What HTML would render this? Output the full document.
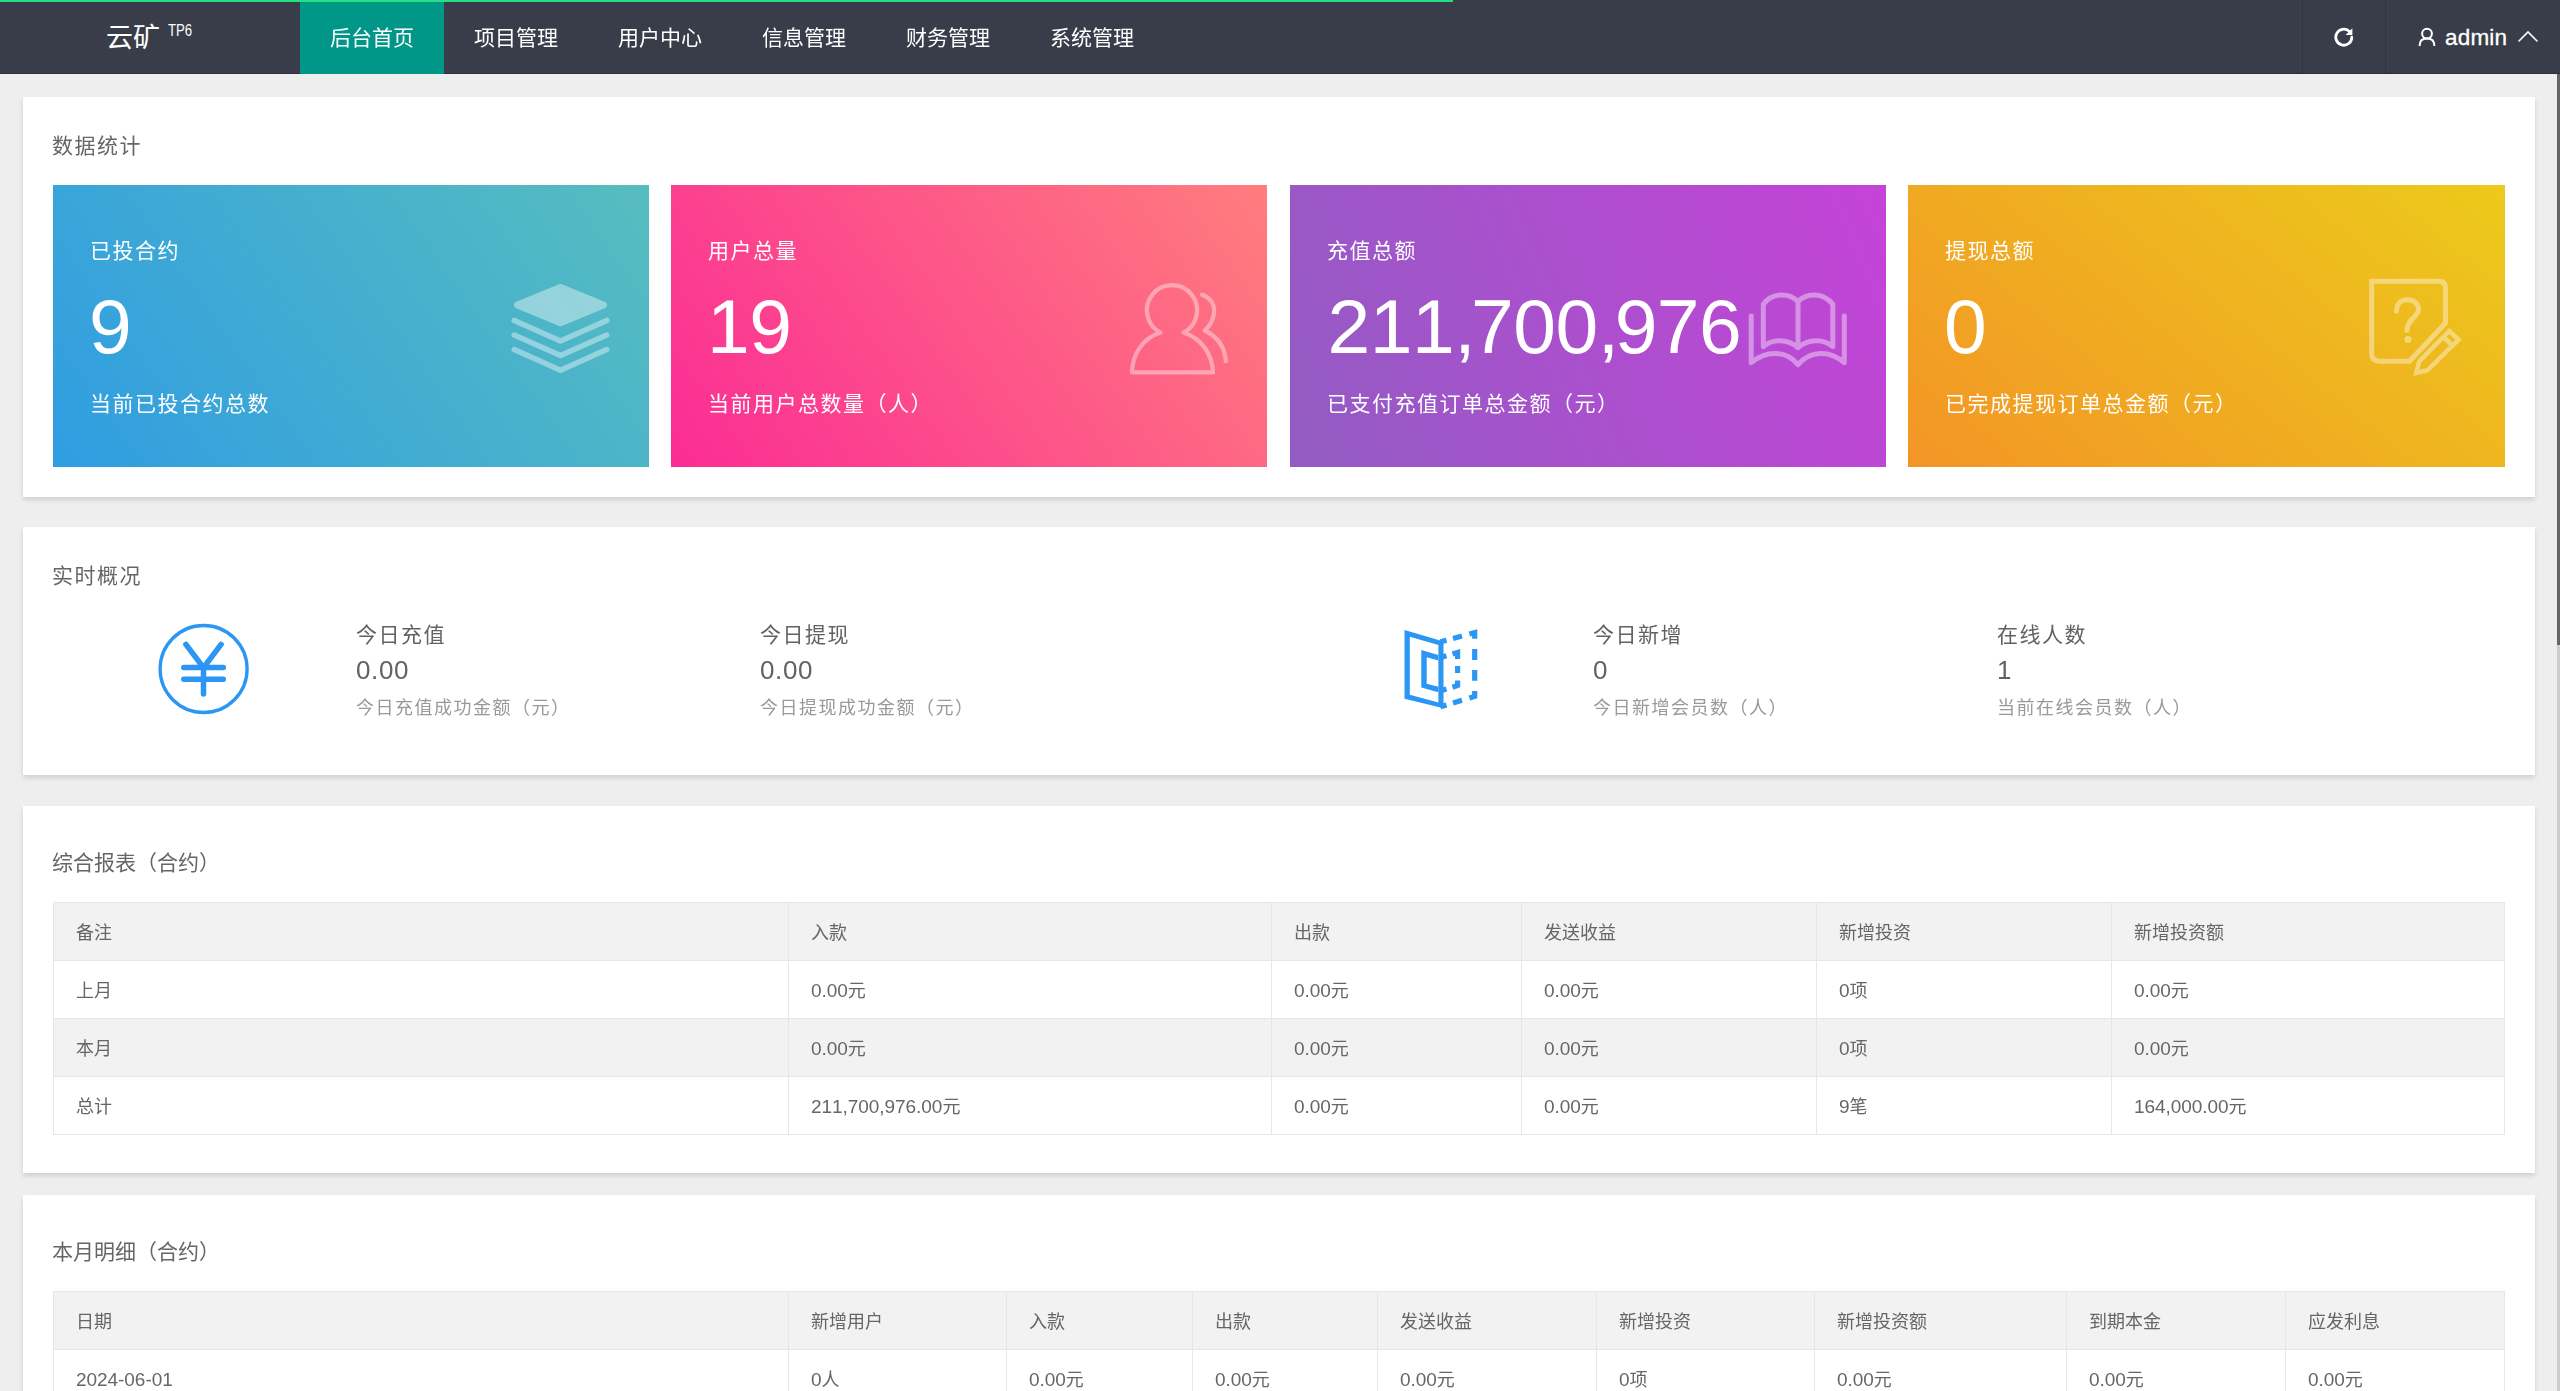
<!DOCTYPE html>
<html lang="zh-CN">
<head>
<meta charset="utf-8">
<title>云矿 TP6 · 后台首页</title>
<style>
*{box-sizing:border-box}
html,body{margin:0;padding:0}
body{width:2560px;height:1391px;overflow:hidden;position:relative;background:#eee;
  font-family:"Liberation Sans","Noto Sans CJK SC",sans-serif;font-size:21px;color:#666;
  -webkit-font-smoothing:antialiased;font-kerning:none}
a{color:inherit;text-decoration:none}
ul{margin:0;padding:0;list-style:none}

/* ---------- header ---------- */
.header{position:absolute;left:0;top:0;width:2560px;height:74px;background:#393d49;z-index:5;
  box-shadow:0 -1px 0 rgba(0,0,0,.22) inset}
.pace{position:absolute;left:0;top:0;width:1453px;height:2px;background:#22e080;z-index:9}
.logo{position:absolute;left:0;top:0;width:300px;height:74px;color:#fff}
.logo .name{position:absolute;left:106px;top:18px;font-size:27px;line-height:40px;white-space:nowrap}
.logo sup{position:absolute;left:168px;top:20px;font-size:16.5px;line-height:20px;white-space:nowrap;transform:scaleX(.8);transform-origin:0 50%}
.nav{position:absolute;left:300px;top:0;height:74px;display:flex}
.nav li{width:144px;height:74px;line-height:74px;text-align:center;color:#fff;font-size:21px;white-space:nowrap}
.nav li.on{background:#009688}
.nav li a{display:block;position:relative;top:1px}
.hbtn{position:absolute;top:0;height:74px;border-left:1px solid rgba(0,0,0,.16)}
.hbtn.refresh{left:2302px;width:83px}
.hbtn.user{left:2385px;width:175px;color:#fff}
.hbtn svg{position:absolute}
.hbtn.user .uname{position:absolute;left:59px;top:23.5px;font-size:22.5px;line-height:28px;white-space:nowrap;letter-spacing:.2px;-webkit-text-stroke:.3px #fff}

/* ---------- scrollbar ---------- */
.sbar{position:absolute;left:2557px;top:74px;width:3px;height:1317px;background:#ccc;z-index:4}
.sbar i{position:absolute;left:0;top:0;width:3px;height:571px;background:#666}

.main{position:absolute;left:0;top:0;width:2557px;height:1391px;overflow:hidden;will-change:transform}
/* ---------- cards ---------- */
.card{position:absolute;left:23px;width:2512px;background:#fff;box-shadow:0 2.5px 4.5px rgba(0,0,0,.12)}
.ctitle{position:absolute;left:52px;font-size:21px;line-height:30px;color:#666;white-space:nowrap}
.ctitle.sp{letter-spacing:1.5px}

/* ---------- stat cards ---------- */
.stat{position:absolute;top:185px;height:282px;color:#fff;font-size:21px;letter-spacing:1.5px;overflow:hidden}
.stat .t1{position:absolute;left:37px;top:23.5px;line-height:84px;white-space:nowrap}
.stat .num{position:absolute;left:36px;top:107.2px;font-size:76.8px;line-height:69px;letter-spacing:-.5px;white-space:nowrap}
.stat .num .c{letter-spacing:-4.4px}
.stat .t3{position:absolute;left:37px;top:176.5px;line-height:84px;white-space:nowrap}
.stat svg{position:absolute;left:0;top:0}
.s1{left:53px;width:596px;background:linear-gradient(-125deg,#57bdbf,#2f9de2)}
.s2{left:671px;width:596px;background:linear-gradient(-125deg,#ff7d7d,#fb2c95)}
.s3{left:1290px;width:596px;background:linear-gradient(-113deg,#c543d8,#925cc3)}
.s4{left:1908px;width:597px;background:linear-gradient(-141deg,#ecca1b,#f39526)}

/* ---------- overview ---------- */
.ov{position:absolute;white-space:nowrap}
.ov .a{font-size:21px;line-height:36px;color:#626262;letter-spacing:1.5px;position:relative;top:1px}
.ov .b{font-size:26px;line-height:36px;color:#626262;letter-spacing:.6px;position:relative}
.ov .c{font-size:18px;line-height:36px;color:#999;letter-spacing:1.5px;position:relative;top:1.8px}

/* ---------- tables ---------- */
table.tb{position:absolute;left:53px;width:2451px;border-collapse:collapse;border-spacing:0;table-layout:fixed;color:#666;font-size:18px}
.tb th,.tb td{height:58px;padding:3px 22px 0 22px;border:1px solid #e6e6e6;text-align:left;font-weight:400;line-height:30px;white-space:nowrap}
.tb .n{font-size:19px;letter-spacing:-.05px}
.tb thead tr,.tb tbody tr:nth-child(even){background:#f2f2f2}
</style>
</head>
<body>
<div class="pace"></div>
<div class="header">
  <div class="logo"><span class="name">云矿</span><sup>TP6</sup></div>
  <ul class="nav">
    <li class="on"><a>后台首页</a></li>
    <li><a>项目管理</a></li>
    <li><a>用户中心</a></li>
    <li><a>信息管理</a></li>
    <li><a>财务管理</a></li>
    <li><a>系统管理</a></li>
  </ul>
  <div class="hbtn refresh">
    <svg width="24" height="24" viewBox="0 0 24 24" style="left:29px;top:24.5px" fill="none" stroke="#fff" stroke-width="2.8" stroke-linecap="round"><path d="M17.2 6.3 A8 8 0 1 0 19.8 12.2"/><path d="M20.4 3.2 V10 H13.6 Z" fill="#fff" stroke="none"/></svg>
  </div>
  <div class="hbtn user">
    <svg width="22" height="24" viewBox="0 0 22 24" style="left:30px;top:25px" fill="none" stroke="#fff" stroke-width="2" stroke-linecap="butt"><circle cx="11" cy="8.6" r="4.9"/><path d="M3.6 21 C3.6 16.2 6.6 13.6 11 13.6 S18.4 16.2 18.4 21"/></svg>
    <span class="uname">admin</span>
    <svg width="24" height="14" viewBox="0 0 24 14" style="left:130px;top:28.5px" fill="none" stroke="#fff" stroke-width="1.6" stroke-linecap="round" stroke-linejoin="miter"><path d="M3 12 L12 3 L21 12"/></svg>
  </div>
</div>
<div class="sbar"><i></i></div>
<div class="main">

<div class="card" style="top:97px;height:400px"></div>
<div class="card" style="top:527px;height:248px"></div>
<div class="card" style="top:806px;height:367px"></div>
<div class="card" style="top:1195px;height:260px"></div>

<div class="ctitle sp" style="top:131px">数据统计</div>
<div class="ctitle sp" style="top:561px">实时概况</div>
<div class="ctitle" style="top:848px">综合报表（合约）</div>
<div class="ctitle" style="top:1237px">本月明细（合约）</div>

<div class="stat s1"><div class="t1">已投合约</div><div class="num">9</div><div class="t3">当前已投合约总数</div></div>
<div class="stat s2"><div class="t1">用户总量</div><div class="num">19</div><div class="t3">当前用户总数量（人）</div></div>
<div class="stat s3"><div class="t1">充值总额</div><div class="num" style="left:37.5px">211<span class="c">,</span>700<span class="c">,</span>976</div><div class="t3">已支付充值订单总金额（元）</div></div>
<div class="stat s4"><div class="t1">提现总额</div><div class="num">0</div><div class="t3">已完成提现订单总金额（元）</div></div>

<div class="ov" style="left:356px;top:616px"><div class="a">今日充值</div><div class="b">0.00</div><div class="c">今日充值成功金额（元）</div></div>
<div class="ov" style="left:760px;top:616px"><div class="a">今日提现</div><div class="b">0.00</div><div class="c">今日提现成功金额（元）</div></div>
<div class="ov" style="left:1593px;top:616px"><div class="a">今日新增</div><div class="b">0</div><div class="c">今日新增会员数（人）</div></div>
<div class="ov" style="left:1997px;top:616px"><div class="a">在线人数</div><div class="b">1</div><div class="c">当前在线会员数（人）</div></div>

<table class="tb" style="top:902px">
<colgroup><col style="width:735px"><col style="width:483px"><col style="width:250px"><col style="width:295px"><col style="width:295px"><col style="width:393px"></colgroup>
<thead><tr><th>备注</th><th>入款</th><th>出款</th><th>发送收益</th><th>新增投资</th><th>新增投资额</th></tr></thead>
<tbody>
<tr><td>上月</td><td><span class="n">0.00</span>元</td><td><span class="n">0.00</span>元</td><td><span class="n">0.00</span>元</td><td><span class="n">0</span>项</td><td><span class="n">0.00</span>元</td></tr>
<tr><td>本月</td><td><span class="n">0.00</span>元</td><td><span class="n">0.00</span>元</td><td><span class="n">0.00</span>元</td><td><span class="n">0</span>项</td><td><span class="n">0.00</span>元</td></tr>
<tr><td>总计</td><td><span class="n">211,700,976.00</span>元</td><td><span class="n">0.00</span>元</td><td><span class="n">0.00</span>元</td><td><span class="n">9</span>笔</td><td><span class="n">164,000.00</span>元</td></tr>
</tbody>
</table>

<table class="tb" style="top:1291px">
<colgroup><col style="width:735px"><col style="width:218px"><col style="width:186px"><col style="width:185px"><col style="width:219px"><col style="width:218px"><col style="width:252px"><col style="width:219px"><col style="width:219px"></colgroup>
<thead><tr><th>日期</th><th>新增用户</th><th>入款</th><th>出款</th><th>发送收益</th><th>新增投资</th><th>新增投资额</th><th>到期本金</th><th>应发利息</th></tr></thead>
<tbody>
<tr><td><span class="n">2024-06-01</span></td><td><span class="n">0</span>人</td><td><span class="n">0.00</span>元</td><td><span class="n">0.00</span>元</td><td><span class="n">0.00</span>元</td><td><span class="n">0</span>项</td><td><span class="n">0.00</span>元</td><td><span class="n">0.00</span>元</td><td><span class="n">0.00</span>元</td></tr>
</tbody>
</table>

<svg class="ic" style="position:absolute;left:0;top:0" width="2557" height="780" viewBox="0 0 2557 780" fill="none">
  <g opacity=".4" stroke="#fff" stroke-linecap="round" stroke-linejoin="round">
    <path d="M560.5 287.4 L603.4 304.9 L560.5 322.8 L517.6 304.9 Z" fill="#fff" stroke-width="7"/>
    <path d="M514.2 320.4 L560.5 341 L606.8 320.4 M514.2 335 L560.5 355.6 L606.8 335 M514.2 349.6 L560.5 370.2 L606.8 349.6" stroke-width="5.5"/>
  </g>
  <g opacity=".4" stroke="#fff" stroke-width="4.2" stroke-linecap="round" stroke-linejoin="round">
    <path d="M1183.6 332.5 A25.1 25.1 0 1 0 1160.4 332.5 C1142 338.5 1132.5 354.7 1131.9 372.4 H1213 C1212.3 354.7 1202 338.5 1183.6 332.5 Z"/>
    <path d="M1202.2 294.7 C1211 298 1215 305 1214 313 C1213 321 1210 326 1204.7 330.5 C1218 337 1225 348 1225.8 361.2"/>
  </g>
  <g opacity=".4" stroke="#fff" stroke-width="5" stroke-linecap="round" stroke-linejoin="round">
    <path d="M1763.3 346.6 V304.3 C1772 293 1788 292 1798 301.3 V347.6 C1788 338.5 1772 338.5 1763.3 346.6 Z"/>
    <path d="M1798 301.3 C1808 292 1824 293 1832.8 304.3 V346.6 C1824 338.5 1808 338.5 1798 347.6"/>
    <path d="M1751.2 315.9 V362.7 C1766 350 1786 350 1798 364.7 C1810 350 1830 350 1844.3 362.7 V315.9"/>
  </g>
  <g opacity=".4" stroke="#fff" stroke-width="5" stroke-linejoin="miter">
    <path d="M2371.7 281.3 H2438.7 Q2445.5 281.3 2445.5 288.2 V322.9 L2409.5 361.2 H2379.3 Q2371.7 361.2 2371.7 353.6 Z"/>
    <path d="M2396.4 311.3 C2396.4 304 2401 299.8 2407.5 299.8 C2414 299.8 2418.5 304 2418.5 309.5 C2418.5 317 2407 319 2407 330.5" stroke-linecap="round"/>
    <circle cx="2408" cy="339.5" r="3.5" fill="#fff" stroke="none"/>
    <path d="M2449.2 331 L2458.6 339.6 L2427.5 370.3 L2416.3 373 L2419.2 361.4 Z M2443.4 337 L2452.6 345.6" stroke-width="4.5"/>
  </g>
  <g stroke="#2b96f3" stroke-linecap="round">
    <circle cx="203.6" cy="669" r="43.5" stroke-width="3.3"/>
    <path d="M185.9 644.4 L203.5 667.6 L221.1 644.4 M183.8 667.6 H223.3 M183.8 679.3 H223.3 M203.5 667.6 V694" stroke-width="5.5"/>
  </g>
  <g fill="#2b96f3" stroke="none">
    <path fill-rule="evenodd" d="M1404.5 629.9 L1443.5 641.5 V708.2 L1404.5 698.8 Z M1409.8 636.7 V694.8 L1438.4 702.6 V645 Z"/>
    <path fill-rule="evenodd" d="M1421.3 650 L1438.4 655 V692.3 L1421.3 687.5 Z M1426.7 657.2 V683.7 L1438.4 686.8 V660.4 Z"/>
  </g>
  <g stroke="#2b96f3" stroke-width="5.2" stroke-linecap="butt" stroke-linejoin="miter">
    <path d="M1440.4 641.8 L1446.5 640.2 M1453 638.4 L1462 636 M1469.4 634 L1474.7 632.6 V638.7 M1474.7 649 V659.9 M1474.7 670.1 V680.8 M1474.7 691.1 V696.4 L1469.4 698 M1462 700.2 L1453 702.9 M1446.5 704.9 L1440.4 706.7"/>
    <path d="M1440.4 657.5 L1446.5 655.8 M1452.5 654 L1457.6 652.5 V658.9 M1457.6 665.9 V673 M1457.6 680.5 V685.5 L1452.5 687.2 M1446.5 689 L1440.4 690.8"/>
  </g>
</svg>

</div>
</body>
</html>
